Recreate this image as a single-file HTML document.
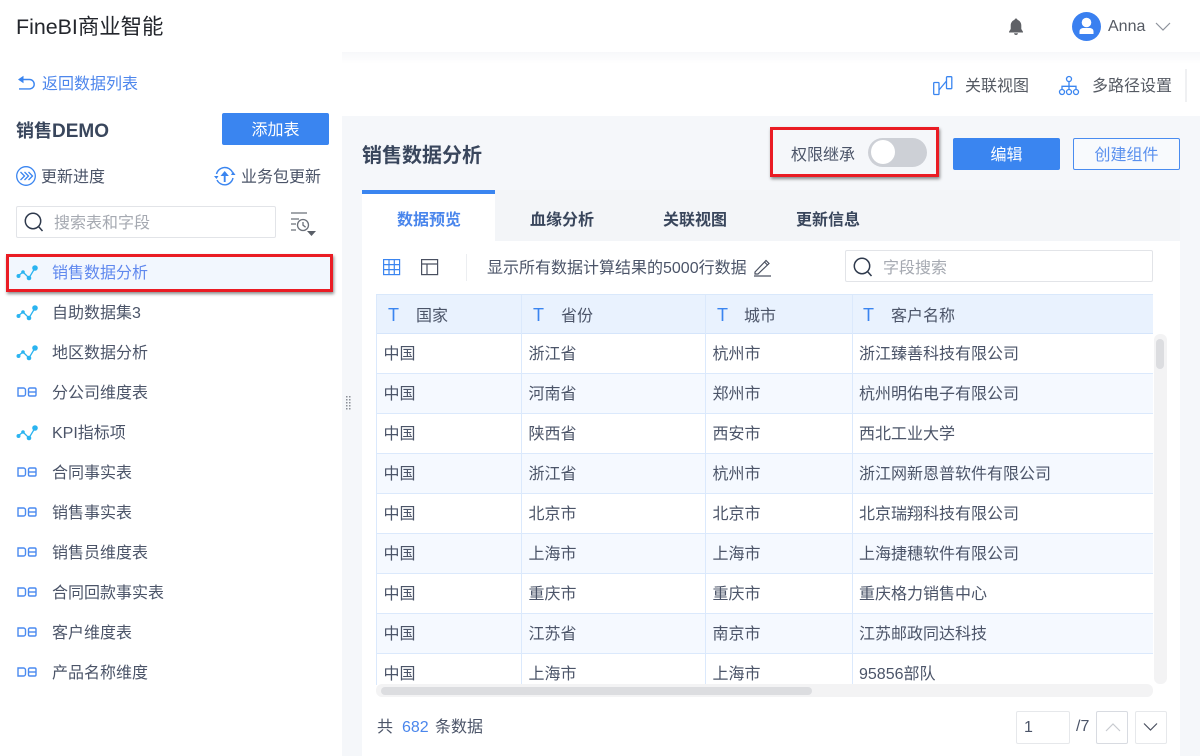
<!DOCTYPE html>
<html lang="zh"><head><meta charset="utf-8"><title>FineBI商业智能</title>
<style>
*{box-sizing:border-box;margin:0;padding:0}
html,body{width:1200px;height:756px;overflow:hidden;background:#fff}
body{position:relative;font-family:"Liberation Sans","Noto Sans CJK SC",sans-serif;font-size:16px;color:#4b5468}
.a{position:absolute;white-space:nowrap;line-height:24px;margin-top:2px}
.b{position:absolute}
svg{position:absolute;overflow:visible}
.row{position:absolute;left:376px;width:777px;height:40px;border-bottom:1px solid #dbe9fc}
.row.alt{background:#f5f9ff}
.v{position:absolute;top:295px;height:390px;width:1px;background:#dbe9fc}
.red{position:absolute;border:3px solid #ea1c24;box-shadow:1px 2px 3px rgba(0,0,0,.45)}
.btn{position:absolute;background:#3a85f0;color:#fff;text-align:center;border-radius:2px;height:32px;line-height:36px}
</style></head><body>
<!-- backgrounds -->
<div class="b" style="left:342px;top:52px;width:858px;height:704px;background:#f5f7fa"></div>
<div class="b" style="left:342px;top:52px;width:858px;height:64px;background:linear-gradient(#f7f8fa,#fff 12px)"></div>
<div class="b" style="left:362px;top:190px;width:818px;height:566px;background:#fff"></div>
<div class="b" style="left:362px;top:190px;width:818px;height:51px;background:#f3f5f8"></div>
<div class="b" style="left:362px;top:190px;width:133px;height:51px;background:#fff;border-top:4px solid #3a85f0"></div>

<!-- top bar -->
<div class="a" style="left:16px;top:10px;font-size:21.4px;line-height:30px;color:#23262c">FineBI商业智能</div>
<svg style="left:1008px;top:18px" width="16" height="18" viewBox="0 0 16 18"><path d="M8 .5c.9 0 1.400.6 1.500 1.400C12 2.800 13.300 5 13.300 7.500V11l1.700 2.700v.8H1v-.8L2.700 11V7.500C2.700 5 4 2.800 6.500 1.900 6.600 1.100 7.100 .5 8 .5zM6 15.200h4C9.800 16.300 9 17 8 17S6.200 16.300 6 15.200z" fill="#5f6166"/></svg>
<div class="b" style="left:1072px;top:12px;width:29px;height:29px;border-radius:50%;background:#3a80f0"></div>
<svg style="left:1072px;top:12px" width="29" height="29" viewBox="0 0 29 29"><circle cx="14.500" cy="10.500" r="4.800" fill="#fff"/><path d="M7.500 22v-2.500c0-2.500 2-3.500 4-3.500h6c2 0 4 1 4 3.500V22z" fill="#fff"/></svg>
<div class="a" style="left:1108px;top:13px;color:#555a63">Anna</div>
<svg style="left:1155px;top:22px" width="16" height="10" viewBox="0 0 16 10"><path d="M1 1l7 7 7-7" fill="none" stroke="#8d929b" stroke-width="1.200"/></svg>

<!-- toolbar -->
<svg style="left:933px;top:76px" width="20" height="20" viewBox="0 0 20 20" fill="none" stroke="#3a85f0" stroke-width="1.300"><rect x=".7" y="6.500" width="5.300" height="12" rx=".8"/><rect x="13.500" y=".7" width="5.300" height="12" rx=".8"/><path d="M6 14l7.500-9"/></svg>
<div class="a" style="left:965px;top:73px;color:#555a63">关联视图</div>
<svg style="left:1059px;top:76px" width="20" height="20" viewBox="0 0 20 20" fill="none" stroke="#3a85f0" stroke-width="1.300"><circle cx="10" cy="3" r="2.500"/><path d="M10 5.500v8M3 13.400V10.300h14v3.100"/><circle cx="3" cy="16" r="2.500"/><circle cx="10" cy="16" r="2.500"/><circle cx="17" cy="16" r="2.500"/></svg>
<div class="a" style="left:1092px;top:73px;color:#555a63">多路径设置</div>
<div class="b" style="left:1185px;top:69px;width:2px;height:33px;background:#eff0f2"></div>

<!-- sidebar header -->
<svg style="left:17px;top:75px" width="18" height="16" viewBox="0 0 18 16" fill="none" stroke="#3a85f0" stroke-width="1.400"><path d="M5 4.500h7.500a4.700 4.700 0 0 1 0 9.400H2"/><path d="M1 4.500L6.500 .8v7.400z" fill="#3a85f0" stroke="none"/></svg>
<div class="a" style="left:42px;top:71px;color:#4d86ec">返回数据列表</div>
<div class="a" style="left:16px;top:117px;font-size:18px;font-weight:700;color:#39465c">销售<span style="font-size:19px">DEMO</span></div>
<div class="btn" style="left:222px;top:113px;width:107px">添加表</div>
<svg style="left:15px;top:166px" width="22" height="21" viewBox="0 0 22 21" fill="none" stroke="#3a85f0" stroke-width="1.300"><circle cx="11" cy="10" r="9.300"/><path d="M5.500 6l4 4-4 4M9.500 6l4 4-4 4M13.500 6l4 4-4 4"/></svg>
<div class="a" style="left:41px;top:164px;color:#4b5468">更新进度</div>
<svg style="left:214px;top:166px" width="22" height="22" viewBox="0 0 22 22" fill="none" stroke="#3a85f0" stroke-width="1.400"><path d="M2.500 8A8.500 8.500 0 0 1 18.500 6.500M19 12A8.500 8.500 0 0 1 3 14"/><path d="M0 10h4.500L2.500 13zM17 9h4.500L19 5.500z" fill="#3a85f0" stroke="none"/><path d="M10.700 16V8" stroke-width="1.900"/><path d="M6.500 10l4.200-5 4.200 5z" fill="#3a85f0" stroke="none"/></svg>
<div class="a" style="left:241px;top:164px;color:#4b5468">业务包更新</div>
<div class="b" style="left:16px;top:206px;width:260px;height:32px;border:1px solid #e2e4e8;border-radius:2px;background:#fff"></div>
<svg style="left:24px;top:212px" width="20" height="20" viewBox="0 0 20 20" fill="none" stroke="#2f3a4d" stroke-width="1.500"><circle cx="9" cy="9" r="7.700"/><path d="M14.500 14.500l4 4.500"/></svg>
<div class="a" style="left:54px;top:210px;color:#a5a9b1">搜索表和字段</div>
<svg style="left:289px;top:212px" width="28" height="24" viewBox="0 0 28 24" fill="none" stroke="#6b7079" stroke-width="1.300"><path d="M2 1h16M2 7h8M2 12h5M2 18h5"/><circle cx="14" cy="13" r="5.500"/><path d="M14 10v3.200l2.600 2"/><path d="M18 19h9l-4.500 5z" fill="#5a5f68" stroke="none"/></svg>

<!-- sidebar list -->
<div class="b" style="left:8px;top:254px;width:322px;height:36px;background:#f2f7fe"></div>
<div class="a" style="left:52px;top:260px;color:#5f88ee">销售数据分析</div>
<div class="a" style="left:52px;top:300px">自助数据集3</div>
<div class="a" style="left:52px;top:340px">地区数据分析</div>
<div class="a" style="left:52px;top:380px">分公司维度表</div>
<div class="a" style="left:52px;top:420px">KPI指标项</div>
<div class="a" style="left:52px;top:460px">合同事实表</div>
<div class="a" style="left:52px;top:500px">销售事实表</div>
<div class="a" style="left:52px;top:540px">销售员维度表</div>
<div class="a" style="left:52px;top:580px">合同回款事实表</div>
<div class="a" style="left:52px;top:620px">客户维度表</div>
<div class="a" style="left:52px;top:660px">产品名称维度</div>
<svg width="0" height="0"><defs>
<g id="ln"><path d="M2 12L7 8l6 6 6-10" fill="none" stroke="#2bb4f0" stroke-width="1.300"/><circle cx="2.500" cy="12" r="2" fill="#2bb4f0"/><circle cx="7" cy="8" r="1.800" fill="#2bb4f0"/><circle cx="13" cy="14" r="2.300" fill="#2bb4f0"/><circle cx="19" cy="4" r="2.800" fill="#2bb4f0"/></g>
<g id="db" fill="none" stroke="#4a8af0" stroke-width="1.400"><path d="M1 1h5.500a2 2 0 0 1 2 2v4a2 2 0 0 1-2 2H1z"/><rect x="11.500" y="1" width="7.500" height="8" rx="1.300"/><path d="M11.500 5h7.500"/></g>
</defs></svg>
<svg style="left:16px;top:264px" width="22" height="18"><use href="#ln"/></svg>
<svg style="left:16px;top:304px" width="22" height="18"><use href="#ln"/></svg>
<svg style="left:16px;top:344px" width="22" height="18"><use href="#ln"/></svg>
<svg style="left:16px;top:424px" width="22" height="18"><use href="#ln"/></svg>
<svg style="left:17px;top:387px" width="20" height="10"><use href="#db"/></svg>
<svg style="left:17px;top:467px" width="20" height="10"><use href="#db"/></svg>
<svg style="left:17px;top:507px" width="20" height="10"><use href="#db"/></svg>
<svg style="left:17px;top:547px" width="20" height="10"><use href="#db"/></svg>
<svg style="left:17px;top:587px" width="20" height="10"><use href="#db"/></svg>
<svg style="left:17px;top:627px" width="20" height="10"><use href="#db"/></svg>
<svg style="left:17px;top:667px" width="20" height="10"><use href="#db"/></svg>
<div class="red" style="left:6px;top:254px;width:327px;height:38px"></div>
<svg style="left:346px;top:396px" width="7" height="17"><g fill="#8b8f96"><rect x="0" y="0" width="1.500" height="1.500"/><rect x="3" y="0" width="1.500" height="1.500"/><rect x="0" y="3" width="1.500" height="1.500"/><rect x="3" y="3" width="1.500" height="1.500"/><rect x="0" y="6" width="1.500" height="1.500"/><rect x="3" y="6" width="1.500" height="1.500"/><rect x="0" y="9" width="1.500" height="1.500"/><rect x="3" y="9" width="1.500" height="1.500"/><rect x="0" y="12" width="1.500" height="1.500"/><rect x="3" y="12" width="1.500" height="1.500"/></g></svg>

<!-- title row -->
<div class="a" style="left:362px;top:142px;font-size:20px;font-weight:700;color:#39465c">销售数据分析</div>
<div class="a" style="left:791px;top:142px;color:#4b5468">权限继承</div>
<div class="b" style="left:868px;top:138px;width:59px;height:29px;border-radius:15px;background:#cdd0d6"></div>
<div class="b" style="left:871px;top:140px;width:24px;height:24px;border-radius:50%;background:#fff"></div>
<div class="red" style="left:770px;top:127px;width:169px;height:50px"></div>
<div class="btn" style="left:953px;top:138px;width:107px">编辑</div>
<div class="btn" style="left:1073px;top:138px;width:107px;background:#f8fafd;border:1px solid #4a8cf0;color:#5a90ee;line-height:33px">创建组件</div>

<!-- tabs -->
<div class="a" style="left:397px;top:207px;font-weight:700;color:#4a86ec">数据预览</div>
<div class="a" style="left:530px;top:207px;font-weight:700;color:#39465c">血缘分析</div>
<div class="a" style="left:663px;top:207px;font-weight:700;color:#39465c">关联视图</div>
<div class="a" style="left:796px;top:207px;font-weight:700;color:#39465c">更新信息</div>

<!-- table toolbar -->
<svg style="left:383px;top:259px" width="18" height="17" viewBox="0 0 18 17" fill="none" stroke="#3a85f0" stroke-width="1.200"><rect x=".6" y=".6" width="16" height="15"/><path d="M.6 5.600h16M.6 10.600h16M6 .6v15M11.300 .6v15"/></svg>
<svg style="left:421px;top:259px" width="18" height="17" viewBox="0 0 18 17" fill="none" stroke="#4a5060" stroke-width="1.200"><rect x=".6" y=".6" width="16" height="15"/><path d="M.6 5h16M6 5v10.600"/></svg>
<div class="b" style="left:466px;top:254px;width:1px;height:27px;background:#eceef1"></div>
<div class="a" style="left:487px;top:255px;color:#4b5468">显示所有数据计算结果的5000行数据</div>
<svg style="left:753px;top:258px" width="20" height="19" viewBox="0 0 20 19" fill="none" stroke="#4a5060" stroke-width="1.200"><path d="M2 14L13 2.500l3 3L5 16H2zM11.500 4l3 3M1 18h17"/></svg>
<div class="b" style="left:845px;top:250px;width:308px;height:32px;border:1px solid #e2e4e8;border-radius:2px"></div>
<svg style="left:853px;top:257px" width="20" height="20" viewBox="0 0 20 20" fill="none" stroke="#2f3a4d" stroke-width="1.500"><circle cx="9" cy="9" r="7.700"/><path d="M14.500 14.500l4 4.500"/></svg>
<div class="a" style="left:883px;top:255px;color:#a5a9b1">字段搜索</div>

<!-- table -->
<div class="row" style="top:294px;height:40px;background:#e9f2fe;border-top:1px solid #d9e8fb;border-bottom:1px solid #d5e5fb"></div>
<div class="row" style="top:334px"></div>
<div class="row alt" style="top:374px"></div>
<div class="row" style="top:414px"></div>
<div class="row alt" style="top:454px"></div>
<div class="row" style="top:494px"></div>
<div class="row alt" style="top:534px"></div>
<div class="row" style="top:574px"></div>
<div class="row alt" style="top:614px"></div>
<div class="b" style="left:376px;top:654px;width:777px;height:31px;background:#fff"></div>
<div class="v" style="left:376px"></div><div class="v" style="left:521px"></div><div class="v" style="left:705px"></div><div class="v" style="left:852px"></div>

<div class="a" style="left:388px;top:301px;color:#3a85f0;font-size:18px">T</div><div class="a" style="left:416px;top:303px">国家</div>
<div class="a" style="left:533px;top:301px;color:#3a85f0;font-size:18px">T</div><div class="a" style="left:561px;top:303px">省份</div>
<div class="a" style="left:717px;top:301px;color:#3a85f0;font-size:18px">T</div><div class="a" style="left:744px;top:303px">城市</div>
<div class="a" style="left:863px;top:301px;color:#3a85f0;font-size:18px">T</div><div class="a" style="left:891px;top:303px">客户名称</div>

<div class="a" style="left:383.500px;top:341px">中国</div><div class="a" style="left:528.500px;top:341px">浙江省</div><div class="a" style="left:712.500px;top:341px">杭州市</div><div class="a" style="left:859px;top:341px">浙江臻善科技有限公司</div>
<div class="a" style="left:383.500px;top:381px">中国</div><div class="a" style="left:528.500px;top:381px">河南省</div><div class="a" style="left:712.500px;top:381px">郑州市</div><div class="a" style="left:859px;top:381px">杭州明佑电子有限公司</div>
<div class="a" style="left:383.500px;top:421px">中国</div><div class="a" style="left:528.500px;top:421px">陕西省</div><div class="a" style="left:712.500px;top:421px">西安市</div><div class="a" style="left:859px;top:421px">西北工业大学</div>
<div class="a" style="left:383.500px;top:461px">中国</div><div class="a" style="left:528.500px;top:461px">浙江省</div><div class="a" style="left:712.500px;top:461px">杭州市</div><div class="a" style="left:859px;top:461px">浙江网新恩普软件有限公司</div>
<div class="a" style="left:383.500px;top:501px">中国</div><div class="a" style="left:528.500px;top:501px">北京市</div><div class="a" style="left:712.500px;top:501px">北京市</div><div class="a" style="left:859px;top:501px">北京瑞翔科技有限公司</div>
<div class="a" style="left:383.500px;top:541px">中国</div><div class="a" style="left:528.500px;top:541px">上海市</div><div class="a" style="left:712.500px;top:541px">上海市</div><div class="a" style="left:859px;top:541px">上海捷穗软件有限公司</div>
<div class="a" style="left:383.500px;top:581px">中国</div><div class="a" style="left:528.500px;top:581px">重庆市</div><div class="a" style="left:712.500px;top:581px">重庆市</div><div class="a" style="left:859px;top:581px">重庆格力销售中心</div>
<div class="a" style="left:383.500px;top:621px">中国</div><div class="a" style="left:528.500px;top:621px">江苏省</div><div class="a" style="left:712.500px;top:621px">南京市</div><div class="a" style="left:859px;top:621px">江苏邮政同达科技</div>
<div class="a" style="left:383.500px;top:661px">中国</div><div class="a" style="left:528.500px;top:661px">上海市</div><div class="a" style="left:712.500px;top:661px">上海市</div><div class="a" style="left:859px;top:661px">95856部队</div>

<!-- scrollbars -->
<div class="b" style="left:1154px;top:334px;width:13px;height:350px;background:#f3f3f4;border-radius:6px"></div>
<div class="b" style="left:1156px;top:339px;width:8px;height:30px;background:#dcdde0;border-radius:4px"></div>
<div class="b" style="left:376px;top:684px;width:777px;height:13px;background:#f3f3f4;border-radius:6px"></div>
<div class="b" style="left:381px;top:687px;width:431px;height:8px;background:#dcdde0;border-radius:4px"></div>

<!-- footer -->
<div class="a" style="left:377px;top:714px">共</div>
<div class="a" style="left:402px;top:714px;color:#4a86ec">682</div>
<div class="a" style="left:435px;top:714px">条数据</div>
<div class="b" style="left:1016px;top:711px;width:54px;height:33px;border:1px solid #e6e8eb;border-radius:2px"></div>
<div class="a" style="left:1024px;top:714px">1</div>
<div class="a" style="left:1076px;top:713px">/7</div>
<div class="b" style="left:1096px;top:711px;width:32px;height:33px;border:1px solid #d8dbe1;border-radius:2px"></div>
<svg style="left:1105px;top:722px" width="16" height="10"><path d="M1 9l7-7 7 7" fill="none" stroke="#c8cbd0" stroke-width="1.200"/></svg>
<div class="b" style="left:1135px;top:711px;width:32px;height:33px;border:1px solid #e6e8eb;border-radius:2px"></div>
<svg style="left:1143px;top:722px" width="16" height="10"><path d="M1 1.500l6.500 6.500 6.500-6.500" fill="none" stroke="#4a5060" stroke-width="1.200"/></svg>
</body></html>
